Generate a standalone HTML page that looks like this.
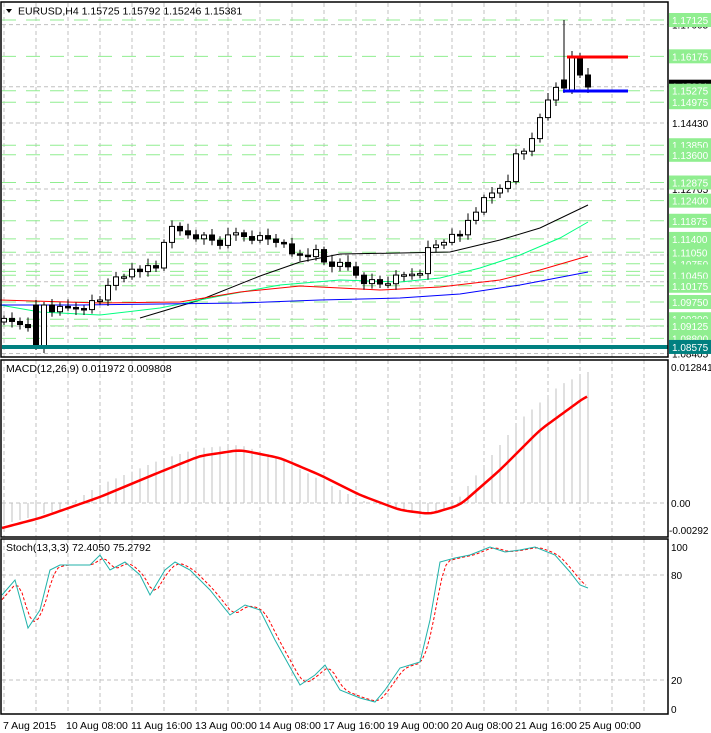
<!DOCTYPE html>
<html><head><meta charset="utf-8"><style>
body{margin:0;background:#fff;width:711px;height:733px;overflow:hidden;font-family:"Liberation Sans",sans-serif}
svg{display:block}
text{font-family:"Liberation Sans",sans-serif;font-size:10.5px}
.ax{font-size:10px}
#lab text{font-size:10px}
</style></head><body>
<svg id="s" width="711" height="733" xmlns="http://www.w3.org/2000/svg">
<rect width="711" height="733" fill="#fff"/>
<g id="grid"></g>
<g id="main"></g>
<rect x="1" y="2" width="667" height="355" fill="none" stroke="#000" stroke-width="1.5"/>
<rect x="1" y="360" width="667" height="177" fill="none" stroke="#000" stroke-width="1.5"/>
<rect x="1" y="539" width="667" height="175" fill="none" stroke="#000" stroke-width="1.5"/>
<path d="M6 9 L12 9 L9 13Z" fill="#000"/>
<text x="18" y="14.5">EURUSD,H4  1.15725 1.15792 1.15246 1.15381</text>
<text x="6" y="372">MACD(12,26,9) 0.011972 0.009808</text>
<text x="6" y="551">Stoch(13,3,3) 72.4050 75.2792</text>
<g id="lab"></g>
<text class="ax" x="671" y="371">0.012841</text>
<text class="ax" x="671" y="507">0.00</text>
<text class="ax" x="669" y="534">-0.00292</text>
<text class="ax" x="671" y="551">100</text>
<text class="ax" x="671" y="579">80</text>
<text class="ax" x="671" y="684">20</text>
<text class="ax" x="671" y="713">0</text>
<g font-size="10.5">
<text x="3" y="729">7 Aug 2015</text>
<text x="66" y="729">10 Aug 08:00</text>
<text x="131" y="729">11 Aug 16:00</text>
<text x="195" y="729">13 Aug 00:00</text>
<text x="259" y="729">14 Aug 08:00</text>
<text x="323" y="729">17 Aug 16:00</text>
<text x="387" y="729">19 Aug 00:00</text>
<text x="451" y="729">20 Aug 08:00</text>
<text x="515" y="729">21 Aug 16:00</text>
<text x="579" y="729">25 Aug 00:00</text>
</g>
</svg>
<script>
(function(){
var NS="http://www.w3.org/2000/svg";
function el(p,t,a){var e=document.createElementNS(NS,t);for(var k in a)e.setAttribute(k,a[k]);document.getElementById(p).appendChild(e);return e;}
function Y(p){return 20+(1.17125-p)*3824;}
function interp(pts,x){for(var i=0;i<pts.length-1;i++){if(x<=pts[i+1][0]){var a=pts[i],b=pts[i+1];return a[1]+(b[1]-a[1])*(x-a[0])/(b[0]-a[0]);}}return pts[pts.length-1][1];}
function poly(p,pts,c,w,d){el(p,"polyline",{points:pts.map(function(q){return q.join(",")}).join(" "),fill:"none",stroke:c,"stroke-width":w||1,"stroke-dasharray":d||"none"});}
function smooth(pts){var r=[];for(var x=pts[0][0];x<=pts[pts.length-1][0];x+=3){r.push([x,(interp(pts,x-6)+interp(pts,x)*2+interp(pts,x+6))/4]);}return r;}
var x;
for(x=4;x<668;x+=32){["3,357","360,537","539,714"].forEach(function(r){var a=r.split(",");el("grid","line",{x1:x,x2:x,y1:a[0],y2:a[1],stroke:"#c0c0c0","stroke-dasharray":"4,3"});});}
el("grid","line",{x1:2,x2:668,y1:503,y2:503,stroke:"#c0c0c0","stroke-dasharray":"4,3"});
el("grid","line",{x1:2,x2:668,y1:575,y2:575,stroke:"#c0c0c0","stroke-dasharray":"4,3"});
el("grid","line",{x1:2,x2:668,y1:680,y2:680,stroke:"#c0c0c0","stroke-dasharray":"4,3"});
var grey=[1.17005,1.15381,1.14430,1.12705,1.1098,1.1028,1.0912,1.08405];
grey.forEach(function(p){el("grid","line",{x1:2,x2:668,y1:Y(p),y2:Y(p),stroke:"#c0c0c0","stroke-dasharray":"4,3"});});
var green=[1.17125,1.16175,1.15275,1.14975,1.13850,1.13600,1.12875,1.12400,1.11875,1.11400,1.11050,1.10750,1.10550,1.10450,1.10175,1.09750,1.09300,1.09125,1.08800];
green.forEach(function(p){el("grid","line",{x1:2,x2:668,y1:Y(p),y2:Y(p),stroke:"#90ee90","stroke-dasharray":"14,10"});});
poly("main",[[140,318],[200,300],[260,276],[300,262],[340,254],[400,253],[450,252],[500,240],[540,228],[588,205]],"#000");
poly("main",[[0,305],[40,312],[100,315],[160,308],[220,296],[280,285],[340,280],[400,282],[440,278],[480,268],[520,255],[560,238],[588,222]],"#00ff7f");
poly("main",[[0,300],[100,303],[180,302],[240,292],[300,286],[380,290],[440,287],[500,280],[540,270],[588,256]],"#ff0000");
poly("main",[[0,305],[80,305],[160,304],[240,303],[320,300],[400,298],[460,294],[520,285],[588,272]],"#0000ff");
var k=[[4,322],[28,324],[36,308],[60,310],[84,306],[100,300],[108,283],[124,278],[132,268],[156,268],[164,240],[172,230],[180,232],[200,236],[220,243],[236,234],[260,238],[276,240],[292,255],[316,252],[324,262],[348,268],[364,280],[380,284],[404,276],[420,270],[428,250],[444,240],[460,236],[470,215],[484,200],[500,186],[510,185],[516,155],[524,150],[540,120],[548,100],[556,85],[564,90],[572,57],[580,77],[588,84]];
var prev=322;
for(var i=0;i<74;i++){var cx=4+8*i;var c=interp(k,cx)+((i*37)%7-3)*1.2;var o=prev;
if(i==4){o=305;c=347;}if(i==5){o=347;c=305;}
if(i==71){o=90;c=57;}if(i==72){o=57;c=75;}if(i==73){o=75;c=87;}if(i==70){o=80;c=88;}
var tp=Math.min(o,c),bt=Math.max(o,c);if(bt-tp<1.5)bt=tp+1.5;
var hi=tp-3-(i*13%5),lo=bt+3+(i*7%4);if(i==70)hi=20;
el("main","line",{x1:cx,x2:cx,y1:hi,y2:lo,stroke:"#000"});
el("main","rect",{x:cx-2.5,y:tp,width:5,height:bt-tp,fill:c>o?"#000":"#fff",stroke:"#000"});
prev=c;}
el("main","line",{x1:567,x2:628,y1:57,y2:57,stroke:"#f00","stroke-width":3});
el("main","line",{x1:563,x2:628,y1:91,y2:91,stroke:"#00f","stroke-width":3});
el("main","line",{x1:2,x2:668,y1:347,y2:347,stroke:"#008080","stroke-width":4});
function lab(p,txt,bg,fg){var y=Y(p);el("lab","rect",{x:669,y:y-7,width:42,height:14,fill:bg});var t=el("lab","text",{x:672,y:y+4,fill:fg});t.textContent=txt;}
[[1.17005,"1.17005"],[1.14430,"1.14430"],[1.12705,"1.12705"],[1.08405,"1.08405"]].forEach(function(a){var t=el("lab","text",{x:672,y:Y(a[0])+4,fill:"#000"});t.textContent=a[1];});
green.forEach(function(p){lab(p,p.toFixed(5),"#90ee90","#fff");});
lab(1.15381,"1.15381","#000","#fff");lab(1.15275,"1.15275","#90ee90","#fff");
lab(1.08575,"1.08575","#008080","#fff");
var h=[[0,525],[60,510],[100,485],[160,460],[200,448],[240,445],[280,458],[320,480],[360,500],[380,505],[420,515],[450,510],[480,470],[520,420],[560,385],[588,372]];
for(i=0;i<74;i++){var hx=4+8*i;el("main","line",{x1:hx,x2:hx,y1:503,y2:interp(h,hx),stroke:"#c0c0c0","stroke-width":1});}
poly("main",smooth([[2,528],[40,518],[100,497],[160,472],[200,456],[240,450],[280,458],[320,475],[360,495],[400,510],[430,514],[460,505],[500,470],[540,430],[588,395]]),"#f00",2.5);
var st=[[2,595],[15,580],[28,628],[40,610],[50,570],[60,565],[70,565],[90,565],[100,555],[110,570],[125,562],[140,575],[150,595],[165,570],[175,562],[190,570],[210,590],[230,615],[245,605],[260,610],[275,640],[300,685],[315,675],[325,665],[340,690],[360,698],[375,702],[385,690],[400,668],[420,662],[430,620],[440,562],[455,558],[470,555],[490,547],[505,552],[520,550],[535,547],[555,555],[570,572],[580,585],[588,588]];
var sg=[];for(x=2;x<=588;x+=4){sg.push([x,(interp(st,x-8)+interp(st,x-4)+interp(st,x))/3]);}
poly("main",sg,"#f00",1,"3,2");
poly("main",st,"#20b2aa",1);
})();
</script>
</body></html>
